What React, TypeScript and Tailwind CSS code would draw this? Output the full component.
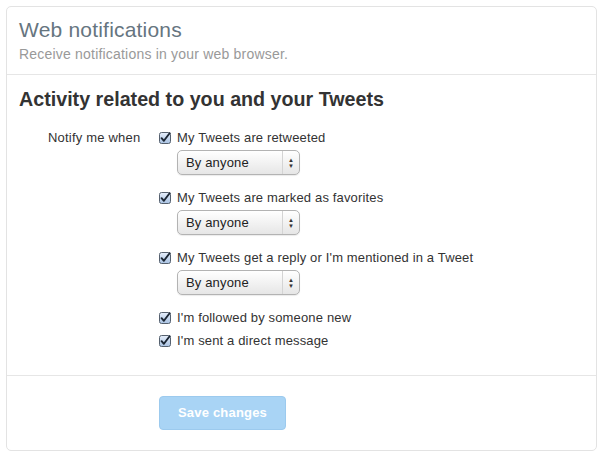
import { ReactNode } from 'react'

const font = "font-['Liberation_Sans',Arial,sans-serif]"

const CheckBox = () => (
  <svg width="12" height="12" viewBox="0 0 12 12" className="shrink-0">
    <defs>
      <linearGradient id="cb" x1="0" y1="0" x2="0" y2="1">
        <stop offset="0" stopColor="#e6eefa" />
        <stop offset="1" stopColor="#a9c2e2" />
      </linearGradient>
    </defs>
    <rect x="0.5" y="0.5" width="11" height="11" rx="2" fill="url(#cb)" stroke="#55606e" />
    <path d="M2.6 6.2 L4.9 8.8 L10.6 1.2" fill="none" stroke="#1a2533" strokeWidth="1.9" strokeLinecap="round" strokeLinejoin="round" />
  </svg>
)

const CheckRow = ({ label }: { label: string }) => (
  <label className="flex h-5 items-center gap-[6px] text-[13px] leading-5 tracking-[0.15px] text-[#333]">
    <CheckBox />
    {label}
  </label>
)

const Select = () => (
  <div className="ml-[18px] mt-[2px] flex h-[25px] w-[123px] items-center rounded-[5px] border border-[#b3b3b3] bg-gradient-to-b from-white to-[#e6e6e6] text-[13px] tracking-[0.15px] text-[#222] shadow-[0_1px_1px_rgba(0,0,0,0.08)]">
    <span className="flex-1 pl-[8px]">By anyone</span>
    <span className="flex h-full w-[17px] flex-col items-center justify-center border-l border-[#d4d4d4] text-[6px] leading-[6px] text-[#333]">
      <span>▲</span>
      <span>▼</span>
    </span>
  </div>
)

const Group = ({ children, className }: { children: ReactNode; className?: string }) => (
  <div className={className}>{children}</div>
)

export default function App() {
  return (
    <div className={`${font} bg-white p-[6px] pb-[10px]`}>
      <div className="w-[591px] rounded-[5px] border border-[#e3e3e3] bg-white">
        <div className="border-b border-[#e6e6e6] px-[12px] pb-[12px] pt-[10px]">
          <h1 className="text-[21px] leading-[26px] tracking-[0.2px] text-[#66757f]">Web notifications</h1>
          <p className="mt-[3px] text-[14px] leading-4 tracking-[0.2px] text-[#999]">
            Receive notifications in your web browser.
          </p>
        </div>

        <div className="border-b border-[#e6e6e6] px-[12px] pb-[24px] pt-[12px]">
          <h2 className="text-[19.7px] font-bold leading-[24px] text-[#333]">
            Activity related to you and your Tweets
          </h2>
          <div className="mt-[17px] flex pl-[29px]">
            <div className="w-[111px] text-[13px] leading-5 tracking-[0.2px] text-[#333]">Notify me when</div>
            <div className="flex flex-col">
              <Group className="mb-[13px]">
                <CheckRow label="My Tweets are retweeted" />
                <Select />
              </Group>
              <Group className="mb-[13px]">
                <CheckRow label="My Tweets are marked as favorites" />
                <Select />
              </Group>
              <Group className="mb-[13px]">
                <CheckRow label="My Tweets get a reply or I'm mentioned in a Tweet" />
                <Select />
              </Group>
              <Group className="flex flex-col gap-[3px]">
                <CheckRow label="I'm followed by someone new" />
                <CheckRow label="I'm sent a direct message" />
              </Group>
            </div>
          </div>
        </div>

        <div className="py-[20px] pl-[152px]">
          <button
            disabled
            className="h-[34px] w-[127px] rounded-[4px] border border-[#9ccaee] bg-[#a9d4f5] text-[13px] font-bold tracking-[0.2px] text-white"
          >
            Save changes
          </button>
        </div>
      </div>
    </div>
  )
}
